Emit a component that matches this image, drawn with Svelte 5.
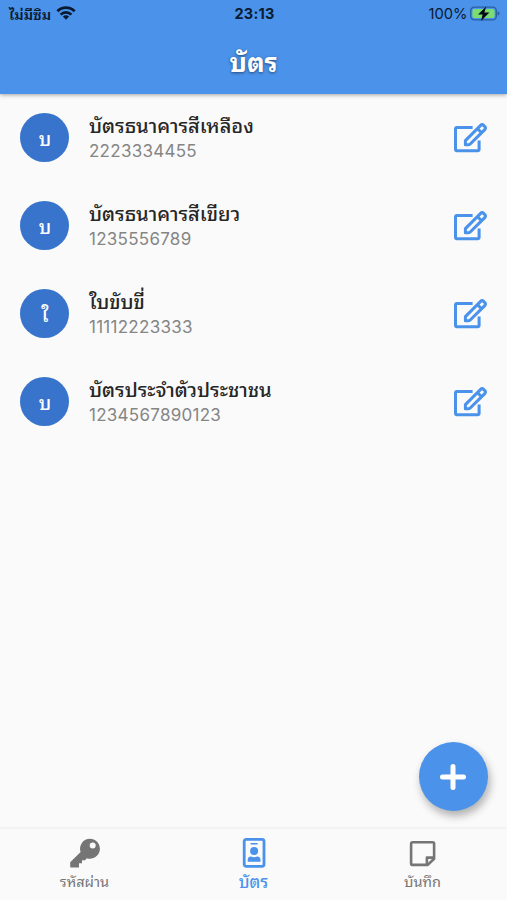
<script lang="ts">
  interface Card {
    initial: string;
    name: string;
    number: string;
  }

  const cards: Card[] = [
    { initial: 'บ', name: 'บัตรธนาคารสีเหลือง', number: '2223334455' },
    { initial: 'บ', name: 'บัตรธนาคารสีเขียว', number: '1235556789' },
    { initial: 'ใ', name: 'ใบขับขี่', number: '11112223333' },
    { initial: 'บ', name: 'บัตรประจำตัวประชาชน', number: '1234567890123' }
  ];

  const tabs = [
    { id: 'passwords', label: 'รหัสผ่าน' },
    { id: 'cards', label: 'บัตร' },
    { id: 'notes', label: 'บันทึก' }
  ];

  let active: string = 'cards';
</script>

<div class="screen">
  <header class="app-bar">
    <div class="status">
      <div class="carrier">
        <span>ไม่มีซิม</span>
        <svg width="20" height="15" viewBox="0 0 20 15" fill="none" stroke="#0a1a30" stroke-width="2.7">
          <path d="M1.4 5.2a12.2 12.2 0 0 1 17.2 0" />
          <path d="M4.6 8.6a7.7 7.7 0 0 1 10.8 0" />
          <path d="M10 13.8 6.9 10.6a4.4 4.4 0 0 1 6.2 0z" fill="#0a1a30" stroke="none" />
        </svg>
      </div>
      <span class="clock">23:13</span>
      <div class="battery">
        <span>100%</span>
        <svg width="30" height="16" viewBox="0 0 30 16">
          <rect x=".7" y="1.2" width="25.6" height="12.6" rx="3.6" fill="none" stroke="#2a5f9f" stroke-width="1.3" />
          <rect x="2.4" y="2.9" width="22.2" height="9.2" rx="2" fill="#7bdc72" />
          <path d="M27.6 5.3q2 .8 2 2.2t-2 2.2z" fill="#2a5f9f" />
          <path d="M16.2.4 8 8.4h4.6L11 15l8.4-8.4h-5z" fill="#050b14" />
        </svg>
      </div>
    </div>
    <h1>บัตร</h1>
  </header>

  <main>
    {#each cards as card}
      <div class="row">
        <div class="avatar">{card.initial}</div>
        <div class="info">
          <div class="name">{card.name}</div>
          <div class="number">{card.number}</div>
        </div>
        <button class="edit" aria-label="แก้ไข">
          <svg width="34" height="32" viewBox="0 0 34 32" fill="none" stroke="#4a92ea" stroke-width="3" stroke-linejoin="round">
            <path d="M18.6 5.5H3q-1.5 0-1.5 1.5v20.2q0 1.5 1.5 1.5h20.6q1.5 0 1.5-1.5V18.5" />
            <path d="M11.4 22.8v-4.2L26.6 3.4q1.5-1.5 3 0l1.2 1.2q1.5 1.5 0 3L16.2 22q-.8.8-2 .8z" />
            <path d="m23.4 6.6 4.2 4.2" />
          </svg>
        </button>
      </div>
    {/each}
  </main>

  <button class="fab" aria-label="เพิ่ม">
    <svg width="26" height="26" viewBox="0 0 26 26" stroke="#fff" stroke-width="5" stroke-linecap="round">
      <path d="M13 2.5v21M2.5 13h21" />
    </svg>
  </button>

  <nav>
    {#each tabs as tab}
      <button class="tab" class:active={tab.id === active} on:click={() => (active = tab.id)}>
        {#if tab.id === 'passwords'}
          <svg width="32" height="32" viewBox="0 0 32 32">
            <path
              fill="currentColor"
              fill-rule="evenodd"
              d="M21 1.7a10 10 0 1 1-3.2 19.5l-1.7 2H13v3h-3v4.4H2.4q-1.2 0-1.2-1.2v-4.1L11.6 15A10 10 0 0 1 21 1.7zM23.7 5.6a3 3 0 1 0 0 6 3 3 0 0 0 0-6z"
            />
          </svg>
        {:else if tab.id === 'cards'}
          <svg width="32" height="32" viewBox="0 0 32 32">
            <rect x="6.2" y="2.3" width="19.8" height="27" rx="2" fill="none" stroke="currentColor" stroke-width="2.8" />
            <rect x="12.4" y="6" width="7.4" height="1.6" rx=".8" fill="currentColor" />
            <circle cx="16.1" cy="14" r="4" fill="currentColor" />
            <path d="M9.7 24.7v-1.5q0-3.4 3.3-3.6 3.1 1.1 6.2 0 3.3.2 3.3 3.6v1.5z" fill="currentColor" />
          </svg>
        {:else}
          <svg width="32" height="32" viewBox="0 0 32 32" fill="none" stroke="currentColor" stroke-width="2.6" stroke-linejoin="round">
            <path d="M5.6 5.3h20q1.5 0 1.5 1.5v14.9l-6.3 6.2H5.6q-1.5 0-1.5-1.5V6.8q0-1.5 1.5-1.5z" />
            <path d="M27.1 20.6h-7.2v7.3" />
          </svg>
        {/if}
        <span>{tab.label}</span>
      </button>
    {/each}
  </nav>
</div>

<style>
  :global(body) {
    margin: 0;
  }

  .screen {
    position: relative;
    display: flex;
    flex-direction: column;
    height: 900px;
    background: #fafafa;
    font-family: Inter, 'Noto Sans Thai Looped', Thonburi, Loma, Garuda, Waree, 'Noto Serif Thai', 'Noto Sans', sans-serif;
    color: #262626;
    overflow: hidden;
  }

  button {
    padding: 0;
    border: 0;
    background: none;
    font: inherit;
    color: inherit;
  }

  svg {
    display: block;
    flex: none;
  }

  .app-bar {
    height: 94px;
    flex: none;
    background: #4a92ea;
    box-shadow: 0 1px 4px rgba(0, 0, 0, 0.35);
  }

  .status {
    display: grid;
    grid-template-columns: 1fr auto 1fr;
    align-items: center;
    height: 27px;
    padding: 0 7px 0 9px;
    box-sizing: border-box;
    font-size: 15px;
    color: #0a1a30;
  }

  .carrier,
  .battery {
    display: flex;
    align-items: center;
    height: 27px;
  }

  .carrier {
    gap: 5px;
    font-size: 14.5px;
    font-weight: 600;
  }

  .clock {
    font-size: 14.5px;
    font-weight: 700;
    letter-spacing: 0.2px;
  }

  .battery {
    justify-content: flex-end;
    gap: 2.5px;
    font-size: 14.7px;
  }

  h1 {
    margin: 0;
    height: 67px;
    line-height: 71px;
    text-align: center;
    font-size: 26px;
    font-weight: 700;
    color: #fff;
    text-shadow: 0 1px 3px rgba(0, 0, 0, 0.5);
  }

  main {
    flex: 1;
  }

  .row {
    display: flex;
    align-items: center;
    height: 88px;
    padding: 0 19px 0 20px;
  }

  .avatar {
    width: 49px;
    height: 49px;
    margin: 0 0 1px 0.4px;
    border-radius: 50%;
    background: #3874cb;
    color: #fff;
    font-size: 19px;
    font-weight: 500;
    line-height: 53px;
    text-align: center;
  }

  .info {
    flex: 1;
    margin-left: 19.6px;
    white-space: nowrap;
  }

  .name {
    height: 26px;
    line-height: 26px;
    font-size: 20px;
    font-weight: 500;
  }

  .number {
    height: 24px;
    line-height: 24px;
    font-size: 17px;
    letter-spacing: 0.27px;
    color: #858585;
  }

  .fab {
    position: absolute;
    right: 19px;
    bottom: 89px;
    display: flex;
    align-items: center;
    justify-content: center;
    width: 69px;
    height: 69px;
    border-radius: 50%;
    background: #4a92ea;
    box-shadow: 2px 5px 9px rgba(0, 0, 0, 0.3);
  }

  .fab svg {
    margin-right: 1px;
  }

  nav {
    display: flex;
    flex: none;
    height: 71px;
    background: #fafafa;
    box-shadow: 0 -1px 3px rgba(0, 0, 0, 0.06);
  }

  .tab {
    display: flex;
    flex: 1;
    flex-direction: column;
    align-items: center;
    padding-top: 8px;
    font-size: 14.5px;
    line-height: 26px;
    color: #757575;
  }

  .tab.active {
    font-size: 16.5px;
    font-weight: 500;
    color: #4a92ea;
  }
</style>
